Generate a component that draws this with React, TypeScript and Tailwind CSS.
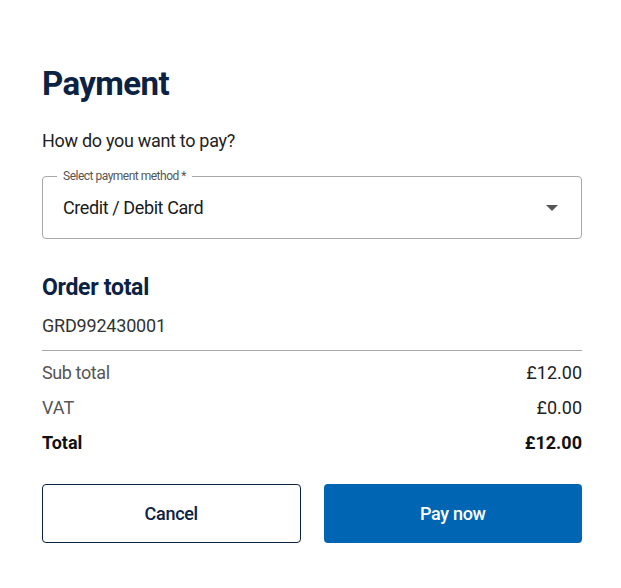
import React from "react";

export default function App() {
  const font = { fontFamily: "Roboto, 'Noto Sans', sans-serif" };
  return (
    <div className="min-h-[588px] w-full bg-white" style={font}>
      <div className="px-[42px] pt-[64px] w-[624px]">
        <h1 className="text-[33px] leading-[40px] font-bold text-[#0c2243] tracking-[-0.6px]">Payment</h1>
        <p className="mt-[25px] text-[18px] leading-[24px] text-[#222] tracking-[-0.3px]">How do you want to pay?</p>
        <div className="relative mt-[23px] h-[63px] rounded-[4px] border border-[#a8a8a8] flex items-center pl-[20px] pr-[20px]">
          <span className="absolute -top-[9px] left-[14px] bg-white px-[6px] text-[12px] leading-[16px] text-[#555] tracking-[-0.5px]">
            Select payment method *
          </span>
          <span className="flex-1 text-[18px] text-[#1a1a1a] tracking-[-0.4px]">Credit / Debit Card</span>
          <svg width="16" height="8" viewBox="0 0 16 8" className="mr-[1px]">
            <path d="M2 1 H14 L8 7 Z" fill="#555" />
          </svg>
        </div>
        <h2 className="mt-[35px] text-[23px] leading-[28px] font-bold text-[#0c2243] tracking-[-0.3px]">Order total</h2>
        <div className="mt-[12px] text-[18px] leading-[24px] text-[#333] tracking-[-0.2px]">GRD992430001</div>
        <div className="mt-[12px] border-t border-[#a8a8a8]" />
        <div className="flex flex-col">
          <div className="flex justify-between items-center h-[35px] pt-[7px] text-[18px] text-[#555]">
            <span className="tracking-[-0.4px]">Sub total</span>
            <span className="text-[#222]">£12.00</span>
          </div>
          <div className="flex justify-between items-center h-[35px] pt-[7px] text-[18px] text-[#555]">
            <span>VAT</span>
            <span className="text-[#222]">£0.00</span>
          </div>
          <div className="flex justify-between items-center h-[35px] pt-[7px] text-[18px] font-bold text-[#111]">
            <span>Total</span>
            <span>£12.00</span>
          </div>
        </div>
        <div className="mt-[28px] grid grid-cols-2 gap-[23px]">
          <button className="h-[59px] rounded-[4px] border border-[#0c2243] bg-white text-[18px] font-medium text-[#0c2243] tracking-[-0.3px]">
            Cancel
          </button>
          <button className="h-[59px] rounded-[4px] bg-[#0066b3] text-[18px] font-medium text-white tracking-[-0.3px]">
            Pay now
          </button>
        </div>
      </div>
    </div>
  );
}
